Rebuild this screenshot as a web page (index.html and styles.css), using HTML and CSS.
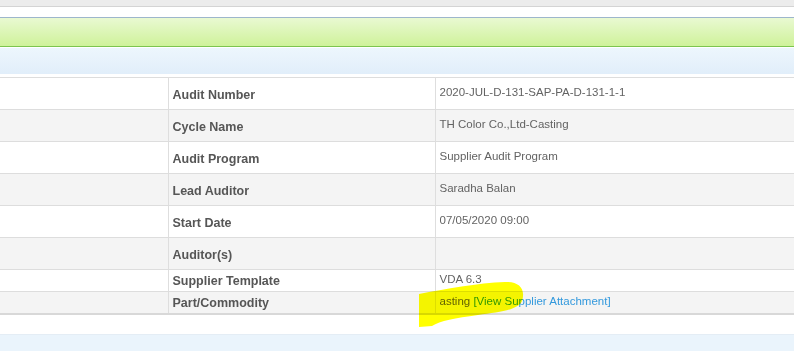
FILE: index.html
```html
<!DOCTYPE html>
<html lang="en">
<head>
  <meta charset="UTF-8">
  <meta name="viewport" content="width=device-width, initial-scale=1.0">
  <title>Audit Details</title>
  <link rel="stylesheet" href="styles.css">
</head>
<body>
  <div class="topbar"></div>
  <div class="title-bar"></div>
  <div class="section-bar"></div>

  <div class="details">
    <table class="info-table">
      <colgroup>
        <col class="col-blank">
        <col class="col-label">
        <col>
      </colgroup>
      <tr>
        <td class="blank"></td>
        <td class="label">Audit Number</td>
        <td class="value">2020-JUL-D-131-SAP-PA-D-131-1-1</td>
      </tr>
      <tr>
        <td class="blank"></td>
        <td class="label">Cycle Name</td>
        <td class="value">TH Color Co.,Ltd-Casting</td>
      </tr>
      <tr>
        <td class="blank"></td>
        <td class="label">Audit Program</td>
        <td class="value">Supplier Audit Program</td>
      </tr>
      <tr>
        <td class="blank"></td>
        <td class="label">Lead Auditor</td>
        <td class="value">Saradha Balan</td>
      </tr>
      <tr>
        <td class="blank"></td>
        <td class="label">Start Date</td>
        <td class="value">07/05/2020 09:00</td>
      </tr>
      <tr>
        <td class="blank"></td>
        <td class="label">Auditor(s)</td>
        <td class="value"></td>
      </tr>
      <tr class="short">
        <td class="blank"></td>
        <td class="label">Supplier Template</td>
        <td class="value">VDA 6.3</td>
      </tr>
      <tr class="short last">
        <td class="blank"></td>
        <td class="label">Part/Commodity</td>
        <td class="value">asting <a href="#" class="attach-link">[View Supplier Attachment]</a></td>
      </tr>
    </table>

    <!-- marker scribble drawn over the screenshot -->
    <svg class="highlight" width="794" height="351" viewBox="0 0 794 351">
      <path d="M419,295 C445,290 478,284 505,283 C519,282 526,290 522,302 C518,311 500,313 478,316 C455,319 440,322 432,327 L419,328 Z" fill="#ffff00"/>
    </svg>
  </div>

  <div class="bottom-gap"></div>
  <div class="section-bar bottom"></div>
</body>
</html>
```

FILE: styles.css
```css
body {
  margin: 0;
  font-family: Tahoma, "Liberation Sans", Arial, sans-serif;
  font-size: 12px;
  color: #636363;
  background: #fff;
  overflow: hidden;
}

.topbar {
  height: 6px;
  background: #ececec;
  border-bottom: 1px solid #d4d4d4;
  margin-bottom: 10px;
}

.title-bar {
  height: 28px;
  border-top: 1px solid #9db6cc;
  border-bottom: 1px solid #7cc54f;
  background: linear-gradient(to bottom, #e9f9d2, #cff29a);
  margin-bottom: 1px;
}

.section-bar {
  height: 26px;
  background: linear-gradient(to bottom, #edf6fd, #e1eefa);
}

.details {
  position: relative;
  padding-top: 3px;
}

.info-table {
  width: 100%;
  table-layout: fixed;
  border-collapse: collapse;
  border-top: 1px solid #dddddd;
}

.col-blank {
  width: 168px;
}

.col-label {
  width: 267px;
}

.info-table td {
  height: 31px;
  padding: 0 4px;
  border-bottom: 1px solid #dddddd;
  line-height: 14px;
}

.info-table tr:nth-child(even) td {
  background: #f4f4f4;
}

.info-table .blank {
  padding: 0;
  border-right: 1px solid #dedede;
}

.info-table .label {
  font-size: 12.5px;
  font-weight: bold;
  color: #565656;
  vertical-align: middle;
  padding-top: 2px;
  height: 29px;
  border-right: 1px solid #dedede;
}

.info-table .value {
  font-size: 11.5px;
  vertical-align: top;
  padding-top: 7px;
  height: 24px;
}

.info-table tr.short td {
  height: 21px;
}

.info-table tr.short .label {
  padding-top: 0;
}

.info-table tr.short .value {
  padding-top: 2px;
  height: 19px;
}

.info-table tr.last td {
  border-bottom: 2px solid #d8d8d8;
}

.attach-link {
  color: #3399dd;
  text-decoration: none;
}

.highlight {
  position: absolute;
  left: 0;
  top: -75px;
  pointer-events: none;
  mix-blend-mode: multiply;
}

.bottom-gap {
  height: 19px;
  border-bottom: 1px solid #e4edf5;
}

.section-bar.bottom {
  background: #eaf4fc;
}
```
